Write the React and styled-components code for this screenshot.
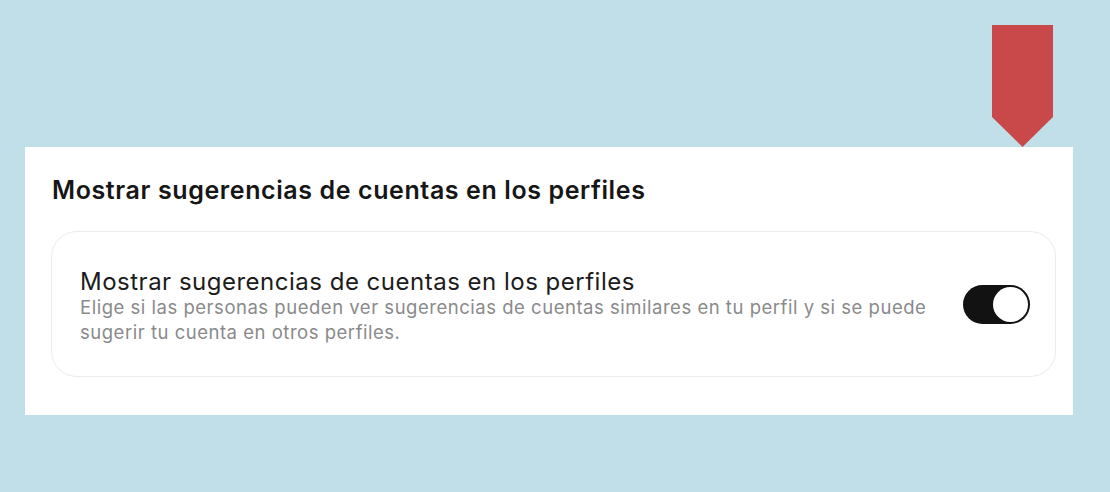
import React, { useState } from "react";
import styled, { createGlobalStyle } from "styled-components";

const GlobalStyle = createGlobalStyle`
  html, body {
    margin: 0;
    padding: 0;
    background: #c1dfe9;
  }
  body {
    font-family: Inter, "Liberation Sans", Arial, sans-serif;
    -webkit-font-smoothing: antialiased;
  }
`;

const Page = styled.div`
  width: 1110px;
  height: 492px;
  box-sizing: border-box;
  padding: 25px 37px 0 25px;
  display: flex;
  flex-direction: column;
`;

const MarkerRow = styled.div`
  display: flex;
  justify-content: flex-end;
  padding-right: 20px;
  height: 122px;
`;

const Marker = styled.svg`
  display: block;
  width: 61px;
  height: 122px;
`;

const Panel = styled.section`
  background: #ffffff;
  width: 1048px;
  height: 268px;
  box-sizing: border-box;
  padding: 27px 17px 0 26px;
  display: flex;
  flex-direction: column;
`;

const Heading = styled.h2`
  margin: 0 0 0 1px;
  font-size: 25px;
  line-height: 32px;
  font-weight: 600;
  color: #161616;
  letter-spacing: 0.6px;
  white-space: nowrap;
`;

const Card = styled.div`
  margin-top: 25px;
  height: 146px;
  box-sizing: border-box;
  border: 1px solid #ececec;
  border-radius: 26px;
  padding: 0 25px 0 28px;
  display: flex;
  align-items: center;
  gap: 28px;
`;

const TextBlock = styled.div`
  flex: 1;
  display: flex;
  flex-direction: column;
  padding-top: 5px;
`;

const Title = styled.div`
  font-size: 24px;
  line-height: 26px;
  font-weight: 400;
  color: #1c1c1c;
  letter-spacing: 0.5px;
  white-space: nowrap;
`;

const Description = styled.div`
  font-size: 18.5px;
  line-height: 25px;
  color: #8a8a8a;
  letter-spacing: 0.52px;
`;

const Switch = styled.button`
  flex: none;
  width: 67px;
  height: 39px;
  border: none;
  border-radius: 20px;
  padding: 2px;
  background: ${(p) => (p.$on ? "#121212" : "#c7c7c7")};
  display: flex;
  justify-content: ${(p) => (p.$on ? "flex-end" : "flex-start")};
  align-items: center;
  cursor: pointer;
  box-sizing: border-box;
`;

const Knob = styled.span`
  width: 35px;
  height: 35px;
  border-radius: 50%;
  background: #ffffff;
  box-sizing: border-box;
`;

export default function App() {
  const [on, setOn] = useState(true);
  return (
    <>
      <GlobalStyle />
      <Page>
        <MarkerRow>
          <Marker viewBox="0 0 61 122">
            <polygon points="0,0 61,0 61,92 30.5,122 0,92" fill="#c9484a" />
          </Marker>
        </MarkerRow>
        <Panel>
          <Heading>Mostrar sugerencias de cuentas en los perfiles</Heading>
          <Card>
            <TextBlock>
              <Title>Mostrar sugerencias de cuentas en los perfiles</Title>
              <Description>
                Elige si las personas pueden ver sugerencias de cuentas similares en tu perfil y si se puede
                sugerir tu cuenta en otros perfiles.
              </Description>
            </TextBlock>
            <Switch $on={on} onClick={() => setOn(!on)} aria-pressed={on}>
              <Knob />
            </Switch>
          </Card>
        </Panel>
      </Page>
    </>
  );
}
